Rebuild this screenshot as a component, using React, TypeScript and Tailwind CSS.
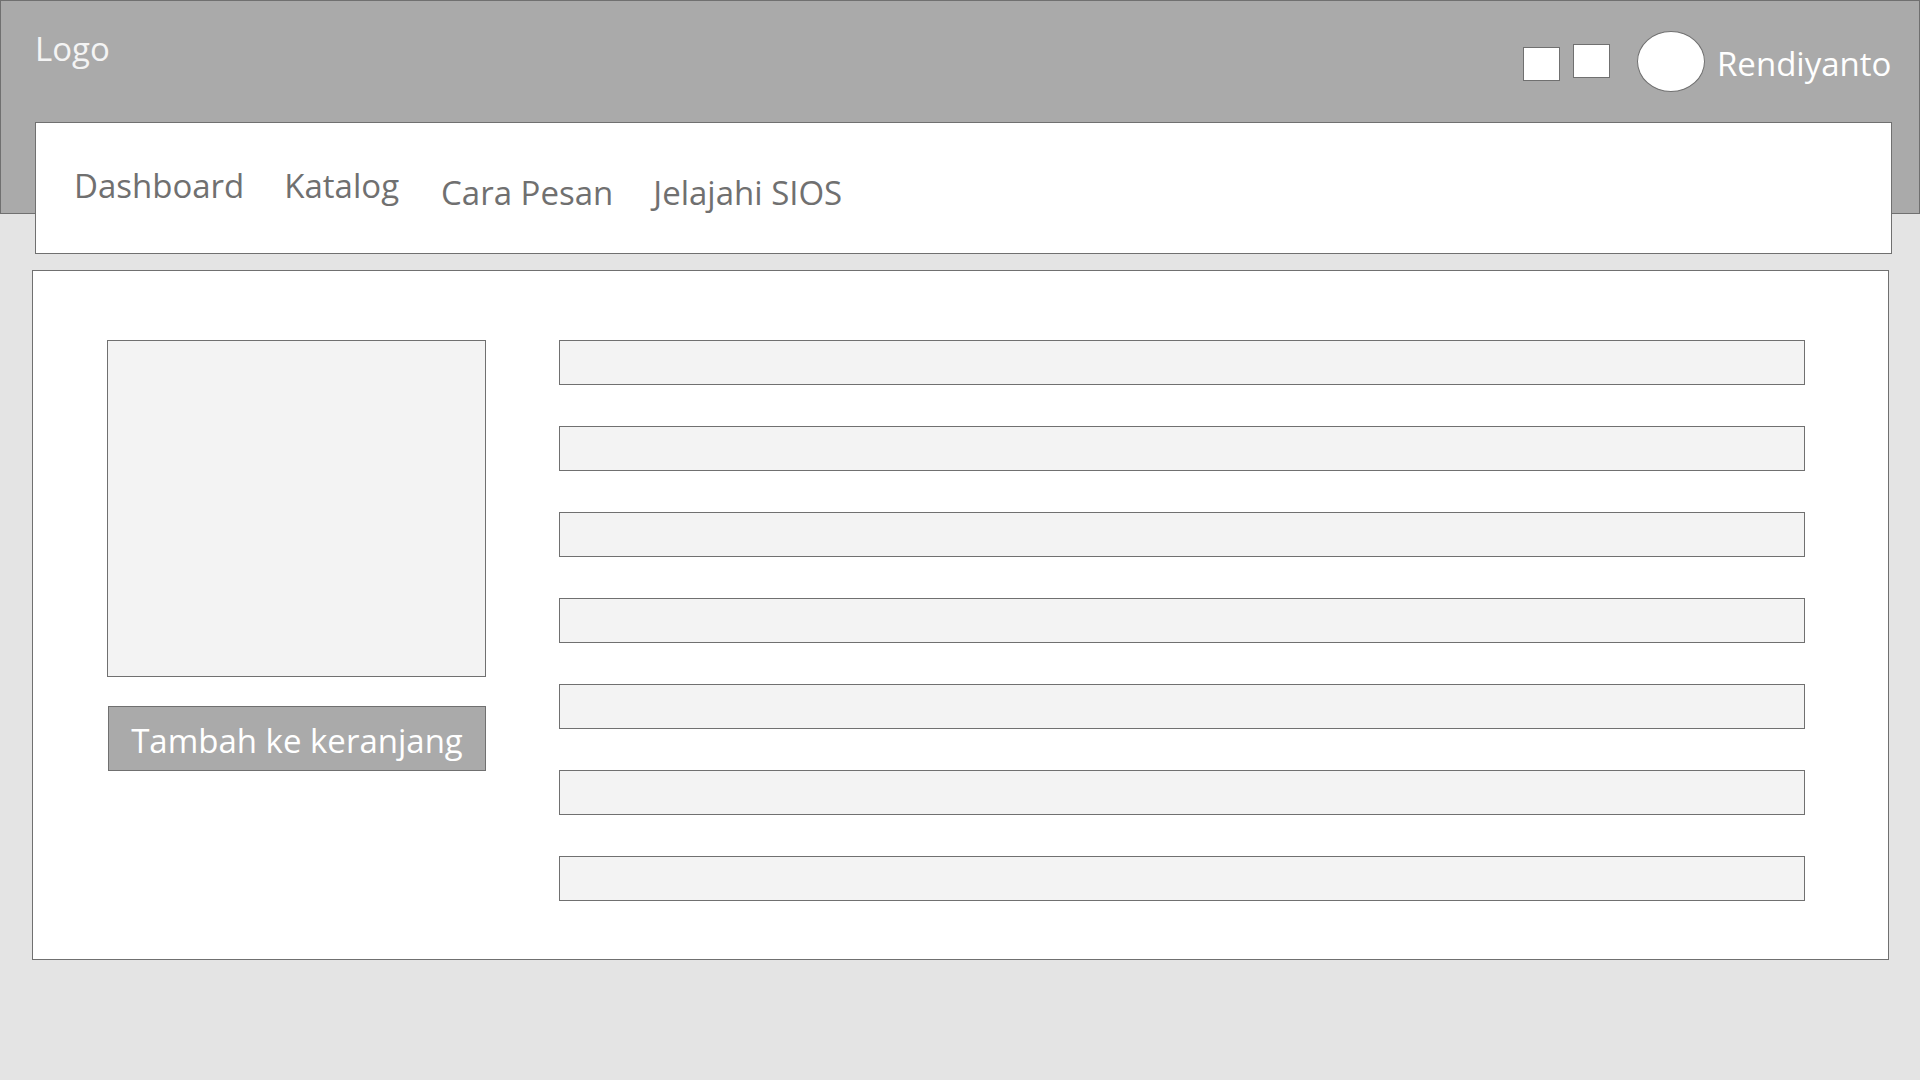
const detailRows = ['Nama', 'Harga', 'Kategori', 'Stok', 'Berat', 'Penjual', 'Deskripsi'];

const primaryLinks = ['Dashboard', 'Katalog'];
const secondaryLinks = ['Cara Pesan', 'Jelajahi SIOS'];

function NavGroup({ links, className }: { links: string[]; className: string }) {
  return (
    <ul className={`flex gap-10 ${className}`}>
      {links.map((label) => (
        <li key={label}>
          <a href="#" className="whitespace-nowrap text-[#707070]">
            {label}
          </a>
        </li>
      ))}
    </ul>
  );
}

function Header() {
  return (
    <header className="flex min-h-[214px] items-start justify-between border border-[#707070] bg-[#aaaaaa] pr-[27px] pl-[34px]">
      <a href="#" className="pt-6 text-[#f4f4f4]">
        Logo
      </a>
      <div className="flex items-start pt-[30px] text-white">
        <div className="flex items-start gap-[13px] pt-[13px] pr-[27px]">
          <button
            type="button"
            aria-label="Keranjang"
            className="mt-[3px] h-[34px] w-[37px] border border-[#707070] bg-white"
          />
          <button
            type="button"
            aria-label="Notifikasi"
            className="h-[34px] w-[37px] border border-[#707070] bg-white"
          />
        </div>
        <div className="mr-3 h-[61px] w-[68px] rounded-[50%] border border-[#707070] bg-white" />
        <span className="min-w-[175px] pt-[9px] whitespace-nowrap">Rendiyanto</span>
      </div>
    </header>
  );
}

export default function App() {
  return (
    <div className="min-h-screen bg-[#e4e4e4] font-['Open_Sans','Noto_Sans',sans-serif] text-[33px] leading-[48px]">
      <Header />
      <nav
        aria-label="Menu utama"
        className="relative -mt-[92px] mr-7 ml-[35px] flex min-h-[132px] items-start border border-[#707070] bg-white px-[38px] pt-[39px]"
      >
        <NavGroup links={primaryLinks} className="" />
        <NavGroup links={secondaryLinks} className="pt-[7px] pl-[42px]" />
      </nav>
      <main className="mt-4 mr-[31px] ml-8 flex gap-[73px] border border-[#707070] bg-white pt-[69px] pr-[83px] pb-[58px] pl-[74px]">
        <section className="w-[379px] shrink-0">
          <div className="h-[337px] border border-[#707070] bg-[#f3f3f3]" />
          <div className="pt-[29px] pl-px">
            <button
              type="button"
              className="h-[65px] w-full border border-[#707070] bg-[#aaaaaa] pt-1 whitespace-nowrap text-white"
            >
              Tambah ke keranjang
            </button>
          </div>
        </section>
        <section className="flex flex-1 flex-col gap-[41px]">
          {detailRows.map((row) => (
            <div key={row} className="h-[45px] border border-[#707070] bg-[#f3f3f3]" />
          ))}
        </section>
      </main>
    </div>
  );
}
